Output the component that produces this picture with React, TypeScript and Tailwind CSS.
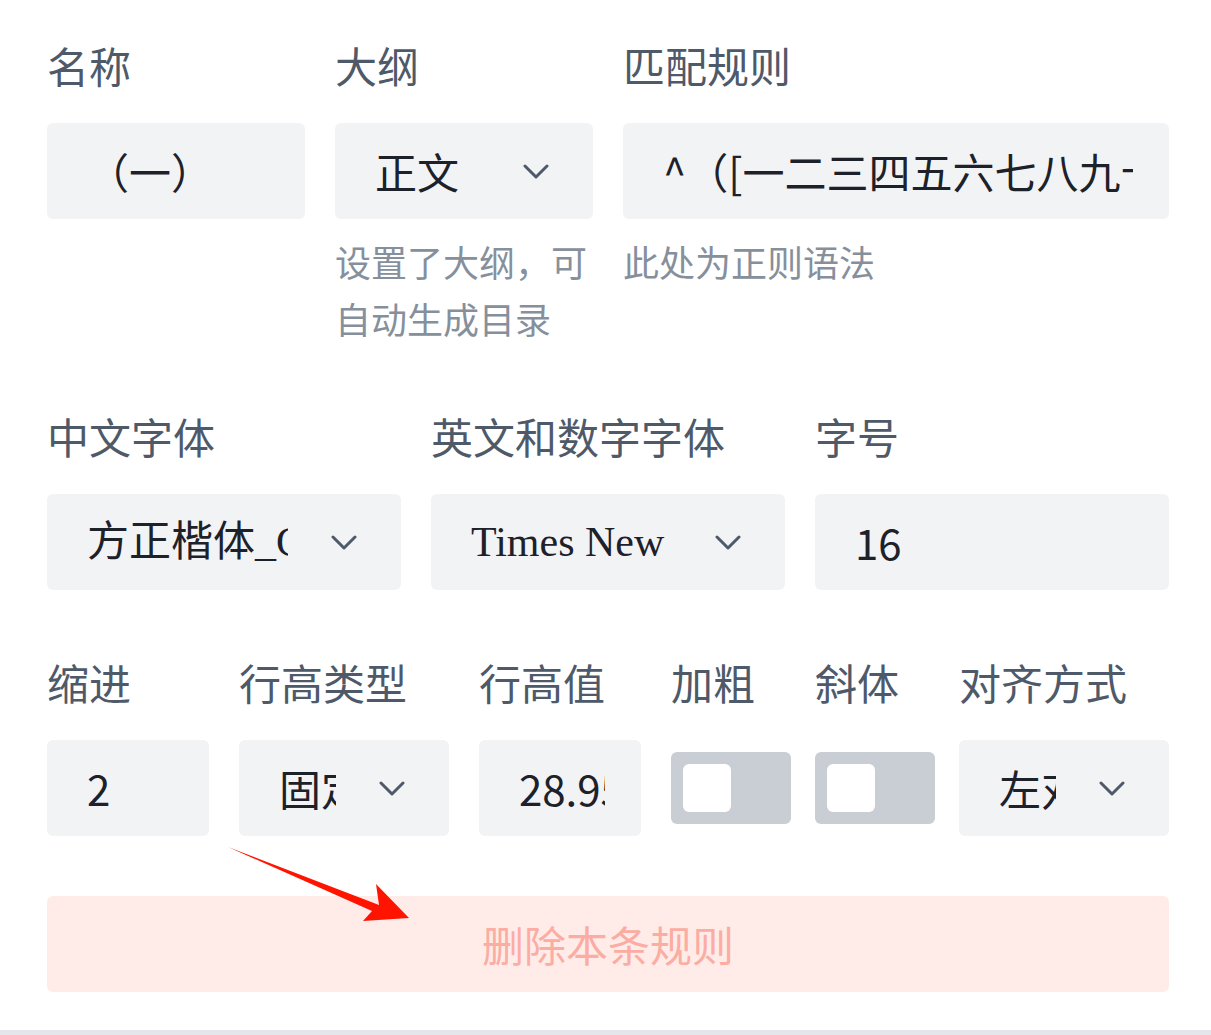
import React from 'react';

const FONT = { fontFamily: '"Noto Sans CJK SC", "Noto Sans", sans-serif' };

const Chevron = () => (
  <svg width="26" height="15" viewBox="0 0 26 15" fill="none" className="shrink-0">
    <path d="M2 2 L13 13 L24 2" stroke="#4e5969" strokeWidth="3" strokeLinecap="round" strokeLinejoin="round" />
  </svg>
);

const Label: React.FC<{ text: string }> = ({ text }) => (
  <div className="text-[42px] leading-[52px] text-[#4e5969] mb-[32px] whitespace-nowrap">{text}</div>
);

const Input: React.FC<{ value: string }> = ({ value }) => (
  <div className="h-[96px] rounded-[6px] bg-[#f2f3f5] flex items-center pl-[40px] pr-[36px]">
    <div className="flex-1 min-w-0 overflow-hidden whitespace-nowrap text-[42px] leading-[60px] text-[#1d2129]">
      {value}
    </div>
  </div>
);

const Select: React.FC<{ value: string; serif?: boolean; kai?: boolean }> = ({ value, serif, kai }) => (
  <div className="h-[96px] rounded-[6px] bg-[#f2f3f5] flex items-center pl-[40px] pr-[44px]">
    <div
      className="flex-1 min-w-0 overflow-hidden whitespace-nowrap text-[42px] leading-[60px] text-[#1d2129]"
      style={
        serif
          ? { fontFamily: '"Liberation Serif", serif' }
          : kai
          ? { fontFamily: '"Liberation Serif", "Noto Sans CJK SC", serif' }
          : undefined
      }
    >
      {value}
    </div>
    <div className="ml-[43px] flex items-center">
      <Chevron />
    </div>
  </div>
);

const Switch = () => (
  <div className="h-[96px] flex items-center">
    <div className="w-[120px] h-[72px] shrink-0 rounded-[6px] bg-[#c9cdd4] flex items-center pl-[12px]">
      <div className="w-[48px] h-[48px] rounded-[6px] bg-white" />
    </div>
  </div>
);

const Help: React.FC<{ text: string }> = ({ text }) => (
  <div className="mt-[14px] text-[36px] leading-[57px] text-[#86909c]">{text}</div>
);

export default function App() {
  return (
    <div className="relative bg-white w-[1211px] h-[1035px] overflow-hidden" style={FONT}>
      <div className="pt-[39px] pl-[47px] pr-[42px]">
        {/* row 1 */}
        <div className="grid grid-cols-4 gap-x-[30px]">
          <div>
            <Label text="名称" />
            <Input value="（一）" />
          </div>
          <div>
            <Label text="大纲" />
            <Select value="正文" />
            <Help text="设置了大纲，可自动生成目录" />
          </div>
          <div className="col-span-2">
            <Label text="匹配规则" />
            <Input value="^（[一二三四五六七八九十]+）" />
            <Help text="此处为正则语法" />
          </div>
        </div>

        {/* row 2 */}
        <div className="grid grid-cols-3 gap-x-[30px] mt-[63px]">
          <div>
            <Label text="中文字体" />
            <Select value="方正楷体_GBK" kai />
          </div>
          <div>
            <Label text="英文和数字字体" />
            <Select value="Times New Roman" serif />
          </div>
          <div>
            <Label text="字号" />
            <Input value="16" />
          </div>
        </div>

        {/* row 3 */}
        <div className="grid grid-cols-[162px_210px_162px_114px_114px_210px] gap-x-[30px] mt-[66px]">
          <div>
            <Label text="缩进" />
            <Input value="2" />
          </div>
          <div>
            <Label text="行高类型" />
            <Select value="固定值" />
          </div>
          <div>
            <Label text="行高值" />
            <Input value="28.95" />
          </div>
          <div>
            <Label text="加粗" />
            <Switch />
          </div>
          <div>
            <Label text="斜体" />
            <Switch />
          </div>
          <div>
            <Label text="对齐方式" />
            <Select value="左对齐" />
          </div>
        </div>

        <button className="mt-[60px] w-full h-[96px] rounded-[6px] bg-[#ffece8] text-[#fbaca3] text-[42px] leading-[60px]">
          删除本条规则
        </button>
      </div>
      <div className="mt-[38px] h-[5px] bg-[#e5e6eb]" />

      <svg className="absolute left-0 top-0 pointer-events-none" width="1211" height="1035">
        <polygon points="228,847 379,905 376,884 409,918 363,921 372,911" fill="#ff1400" />
      </svg>
    </div>
  );
}
